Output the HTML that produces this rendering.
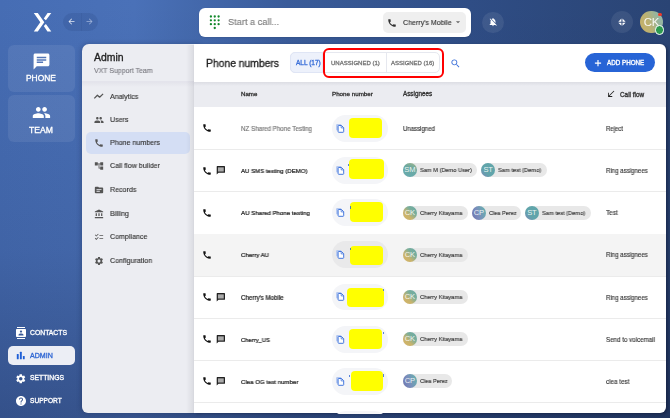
<!DOCTYPE html>
<html><head><meta charset="utf-8"><style>
*{box-sizing:border-box;margin:0;padding:0}
html,body{width:670px;height:418px;overflow:hidden}
body{position:relative;font-family:"Liberation Sans",sans-serif;background:linear-gradient(to bottom,rgba(10,15,40,0) 0%,rgba(10,15,40,0.1) 60%,rgba(10,15,40,0.3) 100%),linear-gradient(to right,#466db4 0%,#4a71b8 20%,#3a5c9a 43%,#2f4d85 70%,#2a4474 100%)}
.abs{position:absolute}
.t{white-space:nowrap;line-height:0;height:0;will-change:transform}
.t{transform:translateY(0)}
.tile{border-radius:6px;background:rgba(255,255,255,0.08)}
.chip{height:14px;border-radius:7px;background:#e8e8e8}
.chip .av{position:absolute;left:0;top:0;width:14px;height:14px;border-radius:7px;color:rgba(255,255,255,0.88);font-size:7.6px;letter-spacing:-0.25px;line-height:14px;text-align:center}
.chip span{position:absolute;left:17.3px;top:7px;line-height:0;font-size:5.7px;color:#333;white-space:nowrap}
</style></head><body>
<svg class="abs" style="left:28px;top:8px" width="30" height="30" viewBox="28 8 30 30"><path fill="#fff" d="M33.8 13 H37.8 L44.3 22.2 L37.8 31.4 H33.8 L40.3 22.2 Z M47.6 13 H51.3 L45.9 20.3 L43.8 18.5 Z M43.8 25.9 L45.9 24.1 L51.3 31.4 H47.4 Z"/></svg>
<div class="abs" style="left:63px;top:13px;width:35px;height:18px;border-radius:9px;background:rgba(20,40,90,0.12)"></div>
<div class="abs" style="left:80.8px;top:13px;width:0.8px;height:18px;background:rgba(20,40,90,0.07)"></div>
<svg class="abs" style="left:66.6px;top:17.4px" width="9" height="9" viewBox="0 0 24 24"><path fill="#e6ebf5" d="M20 11H7.83l5.59-5.59L12 4l-8 8 8 8 1.41-1.41L7.83 13H20v-2z"/></svg>
<svg class="abs" style="left:85.0px;top:17.4px" width="9" height="9" viewBox="0 0 24 24"><path fill="#9fb3d9" d="M12 4l-1.41 1.41L16.17 11H4v2h12.17l-5.58 5.59L12 20l8-8z"/></svg>
<div class="abs tile" style="left:7.5px;top:44.5px;width:67.5px;height:47px"></div>
<svg class="abs" style="left:31.7px;top:51.7px" width="19" height="19" viewBox="0 0 24 24"><path fill="#fff" d="M20 2H4c-1.1 0-1.99.9-1.99 2L2 22l4-4h14c1.1 0 2-.9 2-2V4c0-1.1-.9-2-2-2zM6 9h12v2H6V9zm8 5H6v-2h8v2zm4-6H6V6h12v2z"/></svg>
<div class="abs t" style="left:26.2px;top:78.3px;font-size:8.41px;transform:scaleX(1.0000);transform-origin:0 50%;color:#fff;font-weight:normal;-webkit-text-stroke:0.32px currentColor;">PHONE</div>
<div class="abs tile" style="left:7.5px;top:95.3px;width:67.5px;height:46.7px"></div>
<svg class="abs" style="left:31.7px;top:102.6px" width="18.9" height="18.9" viewBox="0 0 24 24"><path fill="#fff" d="M16 11c1.66 0 2.99-1.34 2.99-3S17.66 5 16 5c-1.66 0-3 1.34-3 3s1.34 3 3 3zm-8 0c1.66 0 2.99-1.34 2.99-3S9.66 5 8 5C6.34 5 5 6.34 5 8s1.34 3 3 3zm0 2c-2.330 0-7 1.17-7 3.5V19h14v-2.5c0-2.33-4.67-3.5-7-3.5zm8 0c-.29 0-.62.02-.97.05 1.16.84 1.97 1.97 1.97 3.45V19h6v-2.5c0-2.33-4.67-3.5-7-3.5z"/></svg>
<div class="abs t" style="left:29.2px;top:129.5px;font-size:8.60px;transform:scaleX(1.0000);transform-origin:0 50%;color:#fff;font-weight:normal;-webkit-text-stroke:0.32px currentColor;">TEAM</div>
<svg class="abs" style="left:14.5px;top:326.5px" width="12" height="12" viewBox="0 0 24 24"><path fill="#fff" d="M20 0H4v2h16V0zM4 24h16v-2H4v2zM20 4H4c-1.1 0-2 .9-2 2v12c0 1.1.9 2 2 2h16c1.1 0 2-.9 2-2V6c0-1.1-.9-2-2-2zm-8 2.75c1.24 0 2.25 1.01 2.25 2.25s-1.01 2.25-2.25 2.25S9.75 10.24 9.75 9 10.76 6.75 12 6.75zM17 17H7v-1.5c0-1.67 3.33-2.5 5-2.5s5 .83 5 2.5V17z"/></svg>
<div class="abs t" style="left:30.2px;top:332.5px;font-size:6.82px;transform:scaleX(1.0000);transform-origin:0 50%;color:#fff;font-weight:normal;-webkit-text-stroke:0.32px currentColor;">CONTACTS</div>
<div class="abs" style="left:7.5px;top:346px;width:67.5px;height:19px;border-radius:5px;background:#eceef5"></div>
<svg class="abs" style="left:12px;top:348px" width="18" height="16" viewBox="12 348 18 16"><rect x="16.8" y="354.1" width="1.9" height="5.2" rx="0.5" fill="#1f5fd6"/><rect x="19.9" y="351.8" width="1.9" height="7.5" rx="0.5" fill="#1f5fd6"/><rect x="22.9" y="356" width="1.8" height="3.3" rx="0.5" fill="#1f5fd6"/></svg>
<div class="abs t" style="left:30.2px;top:355.7px;font-size:7.08px;transform:scaleX(1.0000);transform-origin:0 50%;color:#2f66d3;font-weight:normal;-webkit-text-stroke:0.32px currentColor;">ADMIN</div>
<svg class="abs" style="left:15px;top:372.5px" width="11.5" height="11.5" viewBox="0 0 24 24"><path fill="#fff" d="M19.14 12.94c.04-.3.06-.61.06-.94 0-.32-.02-.64-.07-.94l2.03-1.58c.18-.14.23-.41.12-.61l-1.92-3.32c-.12-.22-.37-.29-.59-.22l-2.39.96c-.5-.38-1.03-.7-1.62-.94l-.36-2.54c-.04-.24-.24-.41-.48-.41h-3.84c-.24 0-.43.17-.47.41l-.36 2.54c-.59.24-1.13.57-1.62.94l-2.39-.96c-.22-.08-.47 0-.59.22L2.74 8.87c-.12.21-.08.47.12.61l2.03 1.58c-.05.3-.09.63-.09.94s.02.64.07.94l-2.03 1.58c-.18.14-.23.41-.12.61l1.92 3.32c.12.22.37.29.59.22l2.39-.96c.5.38 1.03.7 1.62.94l.36 2.54c.05.24.24.41.48.41h3.84c.24 0 .44-.17.47-.41l.36-2.54c.59-.24 1.13-.56 1.62-.94l2.39.96c.22.08.47 0 .59-.22l1.92-3.32c.12-.22.07-.47-.12-.61l-2.01-1.58zM12 15.6c-1.98 0-3.6-1.62-3.6-3.6s1.62-3.6 3.6-3.6 3.6 1.62 3.6 3.6-1.62 3.6-3.6 3.6z"/></svg>
<div class="abs t" style="left:30.2px;top:378.4px;font-size:6.80px;transform:scaleX(1.0000);transform-origin:0 50%;color:#fff;font-weight:normal;-webkit-text-stroke:0.32px currentColor;">SETTINGS</div>
<svg class="abs" style="left:14.5px;top:395px" width="12" height="12" viewBox="0 0 24 24"><path fill="#fff" d="M12 2C6.48 2 2 6.48 2 12s4.48 10 10 10 10-4.48 10-10S17.52 2 12 2zm1 17h-2v-2h2v2zm2.07-7.75l-.9.92C13.45 12.9 13 13.5 13 15h-2v-.5c0-1.1.45-2.1 1.17-2.83l1.24-1.26c.37-.36.59-.86.59-1.41 0-1.1-.9-2-2-2s-2 .9-2 2H8c0-2.21 1.79-4 4-4s4 1.79 4 4c0 .88-.36 1.68-.93 2.25z"/></svg>
<div class="abs t" style="left:30.2px;top:401px;font-size:6.60px;transform:scaleX(1.0000);transform-origin:0 50%;color:#fff;font-weight:normal;-webkit-text-stroke:0.32px currentColor;">SUPPORT</div>
<div class="abs" id="admin" style="left:82px;top:44.2px;width:118px;height:369.3px;background:#ecedf2;border-radius:7px 0 0 6px;box-shadow:-1px 0 5px rgba(10,20,50,0.25)"></div>
<div class="abs" style="left:82px;top:81px;width:112px;height:6px;background:linear-gradient(#e2e2ea,rgba(238,238,244,0))"></div>
<div class="abs" style="left:82px;top:80.8px;width:112px;height:1px;background:#e4e4ec"></div>
<div class="abs t" style="left:94px;top:58.3px;font-size:10.44px;transform:scaleX(1.0000);transform-origin:0 50%;color:#222;font-weight:normal;-webkit-text-stroke:0.32px currentColor;">Admin</div>
<div class="abs t" style="left:94px;top:70.5px;font-size:7.39px;transform:scaleX(0.9434);transform-origin:0 50%;color:#7a7a80;font-weight:normal;-webkit-text-stroke:0.14px currentColor;">VXT Support Team</div>
<div class="abs" style="left:86.3px;top:132.4px;width:103.8px;height:21.3px;border-radius:5px;background:#d4def4"></div>
<svg class="abs" style="left:88px;top:88px" width="20" height="14" viewBox="88 88 20 14"><path d="M94.3 98.4 L97.4 95.2 L99.6 97.2 L103.1 93.9" fill="none" stroke="#555" stroke-width="1.25" stroke-linejoin="round"/></svg>
<div class="abs t" style="left:109.9px;top:96.5px;font-size:7.53px;transform:scaleX(0.9434);transform-origin:0 50%;color:#333;font-weight:normal;-webkit-text-stroke:0.14px currentColor;">Analytics</div>
<svg class="abs" style="left:93.8px;top:114.8px" width="10" height="10" viewBox="0 0 24 24"><path fill="#555" d="M16 11c1.66 0 2.99-1.34 2.99-3S17.66 5 16 5c-1.66 0-3 1.34-3 3s1.34 3 3 3zm-8 0c1.66 0 2.99-1.34 2.99-3S9.66 5 8 5C6.34 5 5 6.34 5 8s1.34 3 3 3zm0 2c-2.330 0-7 1.17-7 3.5V19h14v-2.5c0-2.33-4.67-3.5-7-3.5zm8 0c-.29 0-.62.02-.97.05 1.16.84 1.97 1.97 1.97 3.45V19h6v-2.5c0-2.33-4.67-3.5-7-3.5z"/></svg>
<div class="abs t" style="left:109.9px;top:119.8px;font-size:7.53px;transform:scaleX(0.9434);transform-origin:0 50%;color:#333;font-weight:normal;-webkit-text-stroke:0.14px currentColor;">Users</div>
<svg class="abs" style="left:93.8px;top:138px" width="10" height="10" viewBox="0 0 24 24"><path fill="#555" d="M20.01 15.38c-1.23 0-2.42-.2-3.53-.56-.35-.12-.74-.03-1.01.24l-1.57 1.97c-2.83-1.35-5.48-3.9-6.89-6.830l1.95-1.66c.27-.28.35-.67.24-1.02-.37-1.11-.56-2.3-.56-3.53 0-.54-.45-.99-.99-.99H4.19C3.65 3 3 3.24 3 3.99 3 13.28 10.73 21 20.010 21c.71 0 .99-.63.99-1.18v-3.45c0-.54-.45-.99-.99-.99z"/></svg>
<div class="abs t" style="left:109.9px;top:143px;font-size:7.53px;transform:scaleX(0.9434);transform-origin:0 50%;color:#333;font-weight:normal;-webkit-text-stroke:0.14px currentColor;">Phone numbers</div>
<svg class="abs" style="left:93.8px;top:161.4px" width="10" height="10" viewBox="0 0 24 24"><path fill="#555" d="M22 11V3h-7v3H9V3H2v8h7V8h2v10h4v3h7v-8h-7v3h-2V8h2v3z"/></svg>
<div class="abs t" style="left:109.9px;top:166.4px;font-size:7.53px;transform:scaleX(0.9434);transform-origin:0 50%;color:#333;font-weight:normal;-webkit-text-stroke:0.14px currentColor;">Call flow builder</div>
<svg class="abs" style="left:93.8px;top:185.2px" width="10" height="10" viewBox="0 0 24 24"><path fill="#555" d="M20 6h-8l-2-2H4c-1.1 0-1.99.9-1.99 2L2 18c0 1.1.9 2 2 2h16c1.1 0 2-.9 2-2V8c0-1.1-.9-2-2-2zm-6 10H6v-2h8v2zm4-4H6v-2h12v2z"/></svg>
<div class="abs t" style="left:109.9px;top:190.2px;font-size:7.53px;transform:scaleX(0.9434);transform-origin:0 50%;color:#333;font-weight:normal;-webkit-text-stroke:0.14px currentColor;">Records</div>
<svg class="abs" style="left:93.8px;top:208.6px" width="10" height="10" viewBox="0 0 24 24"><path fill="#555" d="M4 10h3v7H4zM10.5 10h3v7h-3zM2 19h20v3H2zM17 10h3v7h-3zM12 1L2 6v2h20V6z"/></svg>
<div class="abs t" style="left:109.9px;top:213.6px;font-size:7.53px;transform:scaleX(0.9434);transform-origin:0 50%;color:#333;font-weight:normal;-webkit-text-stroke:0.14px currentColor;">Billing</div>
<svg class="abs" style="left:93.8px;top:231.8px" width="10" height="10" viewBox="0 0 24 24"><path fill="#555" d="M22 7h-9v2h9V7zm0 8h-9v2h9v-2zM5.54 11L2 7.46l1.41-1.41 2.12 2.12 4.24-4.24 1.41 1.41L5.54 11zm0 8L2 15.46l1.41-1.41 2.12 2.12 4.24-4.24 1.41 1.41L5.54 19z"/></svg>
<div class="abs t" style="left:109.9px;top:236.8px;font-size:7.53px;transform:scaleX(0.9434);transform-origin:0 50%;color:#333;font-weight:normal;-webkit-text-stroke:0.14px currentColor;">Compliance</div>
<svg class="abs" style="left:93.8px;top:255.5px" width="10" height="10" viewBox="0 0 24 24"><path fill="#555" d="M19.14 12.94c.04-.3.06-.61.06-.94 0-.32-.02-.64-.07-.94l2.03-1.58c.18-.14.23-.41.12-.61l-1.92-3.32c-.12-.22-.37-.29-.59-.22l-2.39.96c-.5-.38-1.03-.7-1.62-.94l-.36-2.54c-.04-.24-.24-.41-.48-.41h-3.84c-.24 0-.43.17-.47.41l-.36 2.54c-.59.24-1.13.57-1.62.94l-2.39-.96c-.22-.08-.47 0-.59.22L2.74 8.87c-.12.21-.08.47.12.61l2.03 1.58c-.05.3-.09.63-.09.94s.02.64.07.94l-2.03 1.58c-.18.14-.23.41-.12.61l1.92 3.32c.12.22.37.29.59.22l2.39-.96c.5.38 1.03.7 1.62.94l.36 2.54c.05.24.24.41.48.41h3.84c.24 0 .44-.17.47-.41l.36-2.54c.59-.24 1.13-.56 1.62-.94l2.39.96c.22.08.47 0 .59-.22l1.92-3.32c.12-.22.07-.47-.12-.61l-2.01-1.58zM12 15.6c-1.98 0-3.6-1.62-3.6-3.6s1.62-3.6 3.6-3.6 3.6 1.62 3.6 3.6-1.62 3.6-3.6 3.6z"/></svg>
<div class="abs t" style="left:109.9px;top:260.5px;font-size:7.53px;transform:scaleX(0.9434);transform-origin:0 50%;color:#333;font-weight:normal;-webkit-text-stroke:0.14px currentColor;">Configuration</div>
<div class="abs" style="left:194px;top:44.3px;width:472px;height:369.1px;background:#fff;border-radius:0 6px 6px 0;box-shadow:2px 1px 3px rgba(0,0,20,0.3)"></div>
<div class="abs" style="left:186px;top:44.5px;width:8px;height:369px;background:linear-gradient(90deg,rgba(0,0,20,0),rgba(0,0,20,0.08))"></div>
<div class="abs t" style="left:205.7px;top:63px;font-size:10.77px;transform:scaleX(0.9615);transform-origin:0 50%;color:#222;font-weight:normal;-webkit-text-stroke:0.32px currentColor;">Phone numbers</div>
<div class="abs" style="left:290px;top:52.3px;width:150.3px;height:21px;border-radius:5px;border:1px solid #e6e8ef;background:#fff"></div>
<div class="abs" style="left:290px;top:52.3px;width:33px;height:21px;border-radius:5px 0 0 5px;background:#edf1fb;border:1px solid #dfe5f5"></div>
<div class="abs" style="left:385.7px;top:53px;width:1px;height:20px;background:#e6e8ef"></div>
<div class="abs t" style="left:295.8px;top:63px;font-size:6.50px;transform:scaleX(1.0000);transform-origin:0 50%;color:#3a6fd8;font-weight:normal;-webkit-text-stroke:0.32px currentColor;">ALL (17)</div>
<div class="abs t" style="left:331.2px;top:63px;font-size:6.02px;transform:scaleX(1.0000);transform-origin:0 50%;color:#777;font-weight:normal;-webkit-text-stroke:0.32px currentColor;">UNASSIGNED (1)</div>
<div class="abs t" style="left:391.4px;top:63px;font-size:5.99px;transform:scaleX(1.0000);transform-origin:0 50%;color:#777;font-weight:normal;-webkit-text-stroke:0.32px currentColor;">ASSIGNED (16)</div>
<div class="abs" style="left:322.8px;top:48.2px;width:121.4px;height:29.5px;border-radius:6px;border:2.4px solid #f00"></div>
<svg class="abs" style="left:449.5px;top:58px" width="11" height="11" viewBox="0 0 24 24"><path fill="#3a6fd8" d="M15.5 14h-.79l-.28-.27C15.41 12.59 16 11.110 16 9.5 16 5.91 13.09 3 9.5 3S3 5.91 3 9.5 5.91 16 9.5 16c1.61 0 3.09-.59 4.23-1.57l.27.28v.79l5 4.99L20.49 19l-4.99-5zm-6 0C7.01 14 5 11.99 5 9.5S7.01 5 9.5 5 14 7.01 14 9.5 11.99 14 9.5 14z"/></svg>
<div class="abs" style="left:585px;top:53.2px;width:70px;height:19.2px;border-radius:9.6px;background:#2764d6"></div>
<svg class="abs" style="left:590px;top:56px" width="14" height="14" viewBox="590 56 14 14"><path d="M598 60 V66.2 M594.9 63.1 H601.1" stroke="#fff" stroke-width="1.15" fill="none"/></svg>
<div class="abs t" style="left:607.2px;top:63.2px;font-size:6.27px;transform:scaleX(1.0000);transform-origin:0 50%;color:#fff;font-weight:normal;-webkit-text-stroke:0.32px currentColor;">ADD PHONE</div>
<div class="abs" style="left:194px;top:82px;width:471.5px;height:25.2px;background:#ebecf1"></div>
<div class="abs" style="left:194px;top:82px;width:471.5px;height:4px;background:linear-gradient(#dcdde3,rgba(235,236,241,0))"></div>
<div class="abs t" style="left:241px;top:94.4px;font-size:6.15px;transform:scaleX(1.0000);transform-origin:0 50%;color:#333;font-weight:normal;-webkit-text-stroke:0.32px currentColor;">Name</div>
<div class="abs t" style="left:332px;top:94.4px;font-size:6.22px;transform:scaleX(1.0000);transform-origin:0 50%;color:#333;font-weight:normal;-webkit-text-stroke:0.32px currentColor;">Phone number</div>
<div class="abs t" style="left:403.1px;top:94.4px;font-size:6.31px;transform:scaleX(1.0000);transform-origin:0 50%;color:#333;font-weight:normal;-webkit-text-stroke:0.32px currentColor;">Assignees</div>
<svg class="abs" style="left:606.4px;top:89.2px" width="10" height="10" viewBox="0 0 24 24"><path fill="#222" d="M15 19v-2H8.41L20 5.41 18.59 4 7 15.59V9H5v10h10z"/></svg>
<div class="abs t" style="left:620px;top:94.6px;font-size:6.40px;transform:scaleX(1.0000);transform-origin:0 50%;color:#333;font-weight:normal;-webkit-text-stroke:0.32px currentColor;">Call flow</div>
<div class="abs" style="left:194px;top:149.18px;width:471.5px;height:1px;background:#ebebeb"></div>
<svg class="abs" style="left:202px;top:123.38999999999999px" width="10" height="10" viewBox="0 0 24 24"><path fill="#111" d="M20.01 15.38c-1.23 0-2.42-.2-3.53-.56-.35-.12-.74-.03-1.01.24l-1.57 1.97c-2.83-1.35-5.48-3.9-6.89-6.830l1.95-1.66c.27-.28.35-.67.24-1.02-.37-1.11-.56-2.3-.56-3.53 0-.54-.45-.99-.99-.99H4.19C3.65 3 3 3.24 3 3.99 3 13.28 10.73 21 20.010 21c.71 0 .99-.63.99-1.18v-3.45c0-.54-.45-.99-.99-.99z"/></svg>
<div class="abs t" style="left:241px;top:128.79px;font-size:6.33px;transform:scaleX(0.9804);transform-origin:0 50%;color:#777;font-weight:normal;-webkit-text-stroke:0.16px currentColor;">NZ Shared Phone Testing</div>
<div class="abs" style="left:332.2px;top:114.89px;width:56px;height:26.8px;border-radius:13.4px;background:#f4f5f8"></div>
<svg class="abs" style="left:335px;top:122.69px" width="10" height="10" viewBox="0 0 10 10"><rect x="1.1" y="0.9" width="5.2" height="6.6" rx="1" fill="#b4c8f0"/><path d="M3.1 3.2 Q3.1 2.5 3.8 2.5 H6.5 L8.7 4.7 V8.6 Q8.7 9.3 8 9.3 H3.8 Q3.1 9.3 3.1 8.6 Z" fill="#fff" stroke="#4477dd" stroke-width="1.0"/><path d="M6.2 2.6 L6.2 4.9 L8.6 4.9" fill="none" stroke="#4477dd" stroke-width="0.8"/></svg>
<div class="abs" style="left:348.8px;top:117.8px;width:33.2px;height:20.4px;border-radius:4px;background:#ffff00"></div>
<div class="abs t" style="left:403.1px;top:128.69px;font-size:6.40px;transform:scaleX(0.9434);transform-origin:0 50%;color:#333;font-weight:normal;-webkit-text-stroke:0.14px currentColor;">Unassigned</div>
<div class="abs t" style="left:606px;top:128.79px;font-size:6.36px;transform:scaleX(0.9434);transform-origin:0 50%;color:#333;font-weight:normal;-webkit-text-stroke:0.14px currentColor;">Reject</div>
<div class="abs" style="left:194px;top:191.36px;width:471.5px;height:1px;background:#ebebeb"></div>
<svg class="abs" style="left:202px;top:165.57px" width="10" height="10" viewBox="0 0 24 24"><path fill="#111" d="M20.01 15.38c-1.23 0-2.42-.2-3.53-.56-.35-.12-.74-.03-1.01.24l-1.57 1.97c-2.83-1.35-5.48-3.9-6.89-6.830l1.95-1.66c.27-.28.35-.67.24-1.02-.37-1.11-.56-2.3-.56-3.53 0-.54-.45-.99-.99-.99H4.19C3.65 3 3 3.24 3 3.99 3 13.28 10.73 21 20.010 21c.71 0 .99-.63.99-1.18v-3.45c0-.54-.45-.99-.99-.99z"/></svg>
<svg class="abs" style="left:214px;top:164.27px" width="14" height="12" viewBox="0 0 14 12"><path d="M3.2 2.1 H10.4 Q11 2.1 11 2.7 V8.2 Q11 8.8 10.4 8.8 H4.5 L2.7 10.6 V2.7 Q2.7 2.1 3.2 2.1 Z" fill="#222"/><rect x="3.95" y="3.35" width="5.8" height="4.2" fill="#ababab"/></svg>
<div class="abs t" style="left:241px;top:170.97px;font-size:6.17px;transform:scaleX(0.9804);transform-origin:0 50%;color:#222;font-weight:normal;-webkit-text-stroke:0.22px currentColor;">AU SMS testing (DEMO)</div>
<div class="abs" style="left:332.2px;top:157.07px;width:56px;height:26.8px;border-radius:13.4px;background:#f4f5f8"></div>
<svg class="abs" style="left:335px;top:164.87px" width="10" height="10" viewBox="0 0 10 10"><rect x="1.1" y="0.9" width="5.2" height="6.6" rx="1" fill="#b4c8f0"/><path d="M3.1 3.2 Q3.1 2.5 3.8 2.5 H6.5 L8.7 4.7 V8.6 Q8.7 9.3 8 9.3 H3.8 Q3.1 9.3 3.1 8.6 Z" fill="#fff" stroke="#4477dd" stroke-width="1.0"/><path d="M6.2 2.6 L6.2 4.9 L8.6 4.9" fill="none" stroke="#4477dd" stroke-width="0.8"/></svg>
<div class="abs" style="left:349px;top:159.2px;width:35.0px;height:19.7px;border-radius:4px;background:#ffff00"></div>
<div class="abs" style="left:347.7px;top:163.9px;width:1.1px;height:2.4px;background:#2f66d3;opacity:0.8"></div>
<div class="abs chip" style="left:402.8px;top:163.47px;width:74.5px"><div class="av" style="background:linear-gradient(200deg,#a4b68a 0%,#6ca9a0 35%,#66aab0 100%)">SM</div></div>
<div class="abs t" style="left:419.8px;top:170.47px;font-size:6.00px;transform:scaleX(0.9434);transform-origin:0 50%;color:#333;font-weight:normal;-webkit-text-stroke:0.14px currentColor;">Sam M (Demo User)</div>
<div class="abs chip" style="left:481.0px;top:163.47px;width:66.4px"><div class="av" style="background:linear-gradient(45deg,#7a86b8 0%,#62a4ab 35%,#5fa6aa 100%)">ST</div></div>
<div class="abs t" style="left:498.0px;top:170.47px;font-size:6.07px;transform:scaleX(0.9434);transform-origin:0 50%;color:#333;font-weight:normal;-webkit-text-stroke:0.14px currentColor;">Sam test (Demo)</div>
<div class="abs t" style="left:606px;top:170.97px;font-size:6.48px;transform:scaleX(0.9434);transform-origin:0 50%;color:#333;font-weight:normal;-webkit-text-stroke:0.14px currentColor;">Ring assignees</div>
<div class="abs" style="left:194px;top:233.54px;width:471.5px;height:1px;background:#ebebeb"></div>
<svg class="abs" style="left:202px;top:207.75px" width="10" height="10" viewBox="0 0 24 24"><path fill="#111" d="M20.01 15.38c-1.23 0-2.42-.2-3.53-.56-.35-.12-.74-.03-1.01.24l-1.57 1.97c-2.83-1.35-5.48-3.9-6.89-6.830l1.95-1.66c.27-.28.35-.67.24-1.02-.37-1.11-.56-2.3-.56-3.53 0-.54-.45-.99-.99-.99H4.19C3.65 3 3 3.24 3 3.99 3 13.28 10.73 21 20.010 21c.71 0 .99-.63.99-1.18v-3.45c0-.54-.45-.99-.99-.99z"/></svg>
<div class="abs t" style="left:241px;top:213.15px;font-size:6.23px;transform:scaleX(0.9804);transform-origin:0 50%;color:#222;font-weight:normal;-webkit-text-stroke:0.22px currentColor;">AU Shared Phone testing</div>
<div class="abs" style="left:332.2px;top:199.25px;width:56px;height:26.8px;border-radius:13.4px;background:#f4f5f8"></div>
<svg class="abs" style="left:335px;top:207.05px" width="10" height="10" viewBox="0 0 10 10"><rect x="1.1" y="0.9" width="5.2" height="6.6" rx="1" fill="#b4c8f0"/><path d="M3.1 3.2 Q3.1 2.5 3.8 2.5 H6.5 L8.7 4.7 V8.6 Q8.7 9.3 8 9.3 H3.8 Q3.1 9.3 3.1 8.6 Z" fill="#fff" stroke="#4477dd" stroke-width="1.0"/><path d="M6.2 2.6 L6.2 4.9 L8.6 4.9" fill="none" stroke="#4477dd" stroke-width="0.8"/></svg>
<div class="abs" style="left:350.4px;top:201.9px;width:32.6px;height:19.9px;border-radius:4px;background:#ffff00"></div>
<div class="abs" style="left:349.9px;top:206.3px;width:1.1px;height:2.4px;background:#2f66d3;opacity:0.8"></div>
<div class="abs chip" style="left:402.8px;top:205.65px;width:65.2px"><div class="av" style="background:linear-gradient(45deg,#d6b566 0%,#c9b36c 35%,#78ae9c 65%,#6aa9a5 100%)">CK</div></div>
<div class="abs t" style="left:419.8px;top:212.65px;font-size:6.02px;transform:scaleX(0.9434);transform-origin:0 50%;color:#333;font-weight:normal;-webkit-text-stroke:0.14px currentColor;">Cherry Kitayama</div>
<div class="abs chip" style="left:471.7px;top:205.65px;width:49.5px"><div class="av" style="background:linear-gradient(70deg,#6c74ae 0%,#7a8cbc 40%,#6aabb0 85%)">CP</div></div>
<div class="abs t" style="left:488.7px;top:212.65px;font-size:5.91px;transform:scaleX(0.9434);transform-origin:0 50%;color:#333;font-weight:normal;-webkit-text-stroke:0.14px currentColor;">Clea Perez</div>
<div class="abs chip" style="left:524.9px;top:205.65px;width:66.4px"><div class="av" style="background:linear-gradient(45deg,#7a86b8 0%,#62a4ab 35%,#5fa6aa 100%)">ST</div></div>
<div class="abs t" style="left:541.9px;top:212.65px;font-size:6.07px;transform:scaleX(0.9434);transform-origin:0 50%;color:#333;font-weight:normal;-webkit-text-stroke:0.14px currentColor;">Sam test (Demo)</div>
<div class="abs t" style="left:606px;top:213.15px;font-size:6.76px;transform:scaleX(0.9434);transform-origin:0 50%;color:#333;font-weight:normal;-webkit-text-stroke:0.14px currentColor;">Test</div>
<div class="abs" style="left:194px;top:233.74px;width:471.5px;height:42.18px;background:#f4f4f4"></div>
<div class="abs" style="left:194px;top:275.72px;width:471.5px;height:1px;background:#ebebeb"></div>
<svg class="abs" style="left:202px;top:249.93px" width="10" height="10" viewBox="0 0 24 24"><path fill="#111" d="M20.01 15.38c-1.23 0-2.42-.2-3.53-.56-.35-.12-.74-.03-1.01.24l-1.57 1.97c-2.83-1.35-5.48-3.9-6.89-6.830l1.95-1.66c.27-.28.35-.67.24-1.02-.37-1.11-.56-2.3-.56-3.53 0-.54-.45-.99-.99-.99H4.19C3.65 3 3 3.24 3 3.99 3 13.28 10.73 21 20.010 21c.71 0 .99-.63.99-1.18v-3.45c0-.54-.45-.99-.99-.99z"/></svg>
<div class="abs t" style="left:241px;top:255.33px;font-size:6.19px;transform:scaleX(0.9804);transform-origin:0 50%;color:#222;font-weight:normal;-webkit-text-stroke:0.22px currentColor;">Cherry AU</div>
<div class="abs" style="left:332.2px;top:241.43px;width:56px;height:26.8px;border-radius:13.4px;background:#e9e9ea"></div>
<svg class="abs" style="left:335px;top:249.23px" width="10" height="10" viewBox="0 0 10 10"><rect x="1.1" y="0.9" width="5.2" height="6.6" rx="1" fill="#b4c8f0"/><path d="M3.1 3.2 Q3.1 2.5 3.8 2.5 H6.5 L8.7 4.7 V8.6 Q8.7 9.3 8 9.3 H3.8 Q3.1 9.3 3.1 8.6 Z" fill="#fff" stroke="#4477dd" stroke-width="1.0"/><path d="M6.2 2.6 L6.2 4.9 L8.6 4.9" fill="none" stroke="#4477dd" stroke-width="0.8"/></svg>
<div class="abs" style="left:350.4px;top:245.6px;width:32.6px;height:19.9px;border-radius:4px;background:#ffff00"></div>
<div class="abs" style="left:349.9px;top:247.60000000000002px;width:1.1px;height:2.4px;background:#2f66d3;opacity:0.8"></div>
<div class="abs chip" style="left:402.8px;top:247.83px;width:65.2px"><div class="av" style="background:linear-gradient(45deg,#d6b566 0%,#c9b36c 35%,#78ae9c 65%,#6aa9a5 100%)">CK</div></div>
<div class="abs t" style="left:419.8px;top:254.83px;font-size:6.02px;transform:scaleX(0.9434);transform-origin:0 50%;color:#333;font-weight:normal;-webkit-text-stroke:0.14px currentColor;">Cherry Kitayama</div>
<div class="abs t" style="left:606px;top:255.33px;font-size:6.48px;transform:scaleX(0.9434);transform-origin:0 50%;color:#333;font-weight:normal;-webkit-text-stroke:0.14px currentColor;">Ring assignees</div>
<div class="abs" style="left:194px;top:317.90px;width:471.5px;height:1px;background:#ebebeb"></div>
<svg class="abs" style="left:202px;top:292.11px" width="10" height="10" viewBox="0 0 24 24"><path fill="#111" d="M20.01 15.38c-1.23 0-2.42-.2-3.53-.56-.35-.12-.74-.03-1.01.24l-1.57 1.97c-2.83-1.35-5.48-3.9-6.89-6.830l1.95-1.66c.27-.28.35-.67.24-1.02-.37-1.11-.56-2.3-.56-3.53 0-.54-.45-.99-.99-.99H4.19C3.65 3 3 3.24 3 3.99 3 13.28 10.73 21 20.010 21c.71 0 .99-.63.99-1.18v-3.45c0-.54-.45-.99-.99-.99z"/></svg>
<svg class="abs" style="left:214px;top:290.81px" width="14" height="12" viewBox="0 0 14 12"><path d="M3.2 2.1 H10.4 Q11 2.1 11 2.7 V8.2 Q11 8.8 10.4 8.8 H4.5 L2.7 10.6 V2.7 Q2.7 2.1 3.2 2.1 Z" fill="#222"/><rect x="3.95" y="3.35" width="5.8" height="4.2" fill="#ababab"/></svg>
<div class="abs t" style="left:241px;top:297.51px;font-size:6.31px;transform:scaleX(0.9804);transform-origin:0 50%;color:#222;font-weight:normal;-webkit-text-stroke:0.22px currentColor;">Cherry's Mobile</div>
<div class="abs" style="left:332.2px;top:283.61px;width:56px;height:26.8px;border-radius:13.4px;background:#f4f5f8"></div>
<svg class="abs" style="left:335px;top:291.41px" width="10" height="10" viewBox="0 0 10 10"><rect x="1.1" y="0.9" width="5.2" height="6.6" rx="1" fill="#b4c8f0"/><path d="M3.1 3.2 Q3.1 2.5 3.8 2.5 H6.5 L8.7 4.7 V8.6 Q8.7 9.3 8 9.3 H3.8 Q3.1 9.3 3.1 8.6 Z" fill="#fff" stroke="#4477dd" stroke-width="1.0"/><path d="M6.2 2.6 L6.2 4.9 L8.6 4.9" fill="none" stroke="#4477dd" stroke-width="0.8"/></svg>
<div class="abs" style="left:347.4px;top:287.5px;width:36.6px;height:19.7px;border-radius:4px;background:#ffff00"></div>
<div class="abs" style="left:383.4px;top:288.8px;width:1.1px;height:2.4px;background:#2f66d3;opacity:0.8"></div>
<div class="abs chip" style="left:402.8px;top:290.01px;width:65.2px"><div class="av" style="background:linear-gradient(45deg,#d6b566 0%,#c9b36c 35%,#78ae9c 65%,#6aa9a5 100%)">CK</div></div>
<div class="abs t" style="left:419.8px;top:297.01px;font-size:6.02px;transform:scaleX(0.9434);transform-origin:0 50%;color:#333;font-weight:normal;-webkit-text-stroke:0.14px currentColor;">Cherry Kitayama</div>
<div class="abs t" style="left:606px;top:297.51px;font-size:6.48px;transform:scaleX(0.9434);transform-origin:0 50%;color:#333;font-weight:normal;-webkit-text-stroke:0.14px currentColor;">Ring assignees</div>
<div class="abs" style="left:194px;top:360.08px;width:471.5px;height:1px;background:#ebebeb"></div>
<svg class="abs" style="left:202px;top:334.29px" width="10" height="10" viewBox="0 0 24 24"><path fill="#111" d="M20.01 15.38c-1.23 0-2.42-.2-3.53-.56-.35-.12-.74-.03-1.01.24l-1.57 1.97c-2.83-1.35-5.48-3.9-6.89-6.830l1.95-1.66c.27-.28.35-.67.24-1.02-.37-1.11-.56-2.3-.56-3.53 0-.54-.45-.99-.99-.99H4.19C3.65 3 3 3.24 3 3.99 3 13.28 10.73 21 20.010 21c.71 0 .99-.63.99-1.18v-3.45c0-.54-.45-.99-.99-.99z"/></svg>
<svg class="abs" style="left:214px;top:332.99px" width="14" height="12" viewBox="0 0 14 12"><path d="M3.2 2.1 H10.4 Q11 2.1 11 2.7 V8.2 Q11 8.8 10.4 8.8 H4.5 L2.7 10.6 V2.7 Q2.7 2.1 3.2 2.1 Z" fill="#222"/><rect x="3.95" y="3.35" width="5.8" height="4.2" fill="#ababab"/></svg>
<div class="abs t" style="left:241px;top:339.69px;font-size:5.96px;transform:scaleX(0.9804);transform-origin:0 50%;color:#222;font-weight:normal;-webkit-text-stroke:0.22px currentColor;">Cherry_US</div>
<div class="abs" style="left:332.2px;top:325.79px;width:56px;height:26.8px;border-radius:13.4px;background:#f4f5f8"></div>
<svg class="abs" style="left:335px;top:333.59px" width="10" height="10" viewBox="0 0 10 10"><rect x="1.1" y="0.9" width="5.2" height="6.6" rx="1" fill="#b4c8f0"/><path d="M3.1 3.2 Q3.1 2.5 3.8 2.5 H6.5 L8.7 4.7 V8.6 Q8.7 9.3 8 9.3 H3.8 Q3.1 9.3 3.1 8.6 Z" fill="#fff" stroke="#4477dd" stroke-width="1.0"/><path d="M6.2 2.6 L6.2 4.9 L8.6 4.9" fill="none" stroke="#4477dd" stroke-width="0.8"/></svg>
<div class="abs" style="left:349px;top:329.2px;width:32.6px;height:20.3px;border-radius:4px;background:#ffff00"></div>
<div class="abs" style="left:382.7px;top:331.8px;width:1.1px;height:2.4px;background:#2f66d3;opacity:0.8"></div>
<div class="abs chip" style="left:402.8px;top:332.19px;width:65.2px"><div class="av" style="background:linear-gradient(45deg,#d6b566 0%,#c9b36c 35%,#78ae9c 65%,#6aa9a5 100%)">CK</div></div>
<div class="abs t" style="left:419.8px;top:339.19px;font-size:6.02px;transform:scaleX(0.9434);transform-origin:0 50%;color:#333;font-weight:normal;-webkit-text-stroke:0.14px currentColor;">Cherry Kitayama</div>
<div class="abs t" style="left:606px;top:339.69px;font-size:6.58px;transform:scaleX(0.9434);transform-origin:0 50%;color:#333;font-weight:normal;-webkit-text-stroke:0.14px currentColor;">Send to voicemail</div>
<div class="abs" style="left:194px;top:402.26px;width:471.5px;height:1px;background:#ebebeb"></div>
<svg class="abs" style="left:202px;top:376.46999999999997px" width="10" height="10" viewBox="0 0 24 24"><path fill="#111" d="M20.01 15.38c-1.23 0-2.42-.2-3.53-.56-.35-.12-.74-.03-1.01.24l-1.57 1.97c-2.83-1.35-5.48-3.9-6.89-6.830l1.95-1.66c.27-.28.35-.67.24-1.02-.37-1.11-.56-2.3-.56-3.53 0-.54-.45-.99-.99-.99H4.19C3.65 3 3 3.24 3 3.99 3 13.28 10.73 21 20.010 21c.71 0 .99-.63.99-1.18v-3.45c0-.54-.45-.99-.99-.99z"/></svg>
<svg class="abs" style="left:214px;top:375.17px" width="14" height="12" viewBox="0 0 14 12"><path d="M3.2 2.1 H10.4 Q11 2.1 11 2.7 V8.2 Q11 8.8 10.4 8.8 H4.5 L2.7 10.6 V2.7 Q2.7 2.1 3.2 2.1 Z" fill="#222"/><rect x="3.95" y="3.35" width="5.8" height="4.2" fill="#ababab"/></svg>
<div class="abs t" style="left:241px;top:381.87px;font-size:6.20px;transform:scaleX(0.9804);transform-origin:0 50%;color:#222;font-weight:normal;-webkit-text-stroke:0.22px currentColor;">Clea OG test number</div>
<div class="abs" style="left:332.2px;top:367.97px;width:56px;height:26.8px;border-radius:13.4px;background:#f4f5f8"></div>
<svg class="abs" style="left:335px;top:375.77px" width="10" height="10" viewBox="0 0 10 10"><rect x="1.1" y="0.9" width="5.2" height="6.6" rx="1" fill="#b4c8f0"/><path d="M3.1 3.2 Q3.1 2.5 3.8 2.5 H6.5 L8.7 4.7 V8.6 Q8.7 9.3 8 9.3 H3.8 Q3.1 9.3 3.1 8.6 Z" fill="#fff" stroke="#4477dd" stroke-width="1.0"/><path d="M6.2 2.6 L6.2 4.9 L8.6 4.9" fill="none" stroke="#4477dd" stroke-width="0.8"/></svg>
<div class="abs" style="left:350.5px;top:371.2px;width:32.6px;height:20.2px;border-radius:4px;background:#ffff00"></div>
<div class="abs" style="left:348.8px;top:375.1px;width:1.1px;height:2.4px;background:#2f66d3;opacity:0.8"></div>
<div class="abs" style="left:383.1px;top:374.3px;width:1.1px;height:2.4px;background:#2f66d3;opacity:0.8"></div>
<div class="abs chip" style="left:402.8px;top:374.37px;width:49.5px"><div class="av" style="background:linear-gradient(70deg,#6c74ae 0%,#7a8cbc 40%,#6aabb0 85%)">CP</div></div>
<div class="abs t" style="left:419.8px;top:381.37px;font-size:5.91px;transform:scaleX(0.9434);transform-origin:0 50%;color:#333;font-weight:normal;-webkit-text-stroke:0.14px currentColor;">Clea Perez</div>
<div class="abs t" style="left:606px;top:381.87px;font-size:6.66px;transform:scaleX(0.9434);transform-origin:0 50%;color:#333;font-weight:normal;-webkit-text-stroke:0.14px currentColor;">clea test</div>
<div class="abs" style="left:194px;top:403px;width:471.5px;height:10.5px;overflow:hidden;border-radius:0 0 5px 0"><div class="abs" style="left:138.2px;top:8px;width:56px;height:26.8px;border-radius:13.4px;background:#f6f6f9"></div></div>
<div class="abs" style="left:198.8px;top:7.5px;width:272.2px;height:29.7px;background:#fff;border-radius:6px;box-shadow:0 1px 2px rgba(0,0,0,0.1)"></div>

<svg class="abs" style="left:204px;top:12px" width="22" height="20" viewBox="0 0 22 20"><circle cx="6.90" cy="4.50" r="1.15" fill="#11882a"/><circle cx="10.75" cy="4.50" r="1.15" fill="#11882a"/><circle cx="14.60" cy="4.50" r="1.15" fill="#11882a"/><circle cx="6.90" cy="8.35" r="1.15" fill="#11882a"/><circle cx="10.75" cy="8.35" r="1.15" fill="#11882a"/><circle cx="14.60" cy="8.35" r="1.15" fill="#11882a"/><circle cx="6.90" cy="12.20" r="1.15" fill="#11882a"/><circle cx="10.75" cy="12.20" r="1.15" fill="#11882a"/><circle cx="14.60" cy="12.20" r="1.15" fill="#11882a"/><circle cx="10.75" cy="16" r="1.15" fill="#11882a"/></svg>
<div class="abs t" style="left:228.4px;top:22.3px;font-size:9.75px;transform:scaleX(0.9434);transform-origin:0 50%;color:#7b7b7b;font-weight:normal;-webkit-text-stroke:0.14px currentColor;">Start a call...</div>
<div class="abs" style="left:382.8px;top:11.7px;width:83.5px;height:21.3px;border-radius:5px;background:#efefef"></div>
<svg class="abs" style="left:386.5px;top:17.5px" width="10" height="10" viewBox="0 0 24 24"><path fill="#333" d="M20.01 15.38c-1.23 0-2.42-.2-3.53-.56-.35-.12-.74-.03-1.01.24l-1.57 1.97c-2.83-1.35-5.48-3.9-6.89-6.830l1.95-1.66c.27-.28.35-.67.24-1.02-.37-1.11-.56-2.3-.56-3.53 0-.54-.45-.99-.99-.99H4.19C3.65 3 3 3.24 3 3.99 3 13.28 10.73 21 20.010 21c.71 0 .99-.63.99-1.18v-3.45c0-.54-.45-.99-.99-.99z"/></svg>
<div class="abs t" style="left:403px;top:22.5px;font-size:7.46px;transform:scaleX(0.9434);transform-origin:0 50%;color:#333;font-weight:normal;-webkit-text-stroke:0.14px currentColor;">Cherry's Mobile</div>
<svg class="abs" style="left:453.3px;top:17.1px" width="10" height="10" viewBox="0 0 24 24"><path fill="#666" d="M7 10l5 5 5-5z"/></svg>
<div class="abs" style="left:482px;top:11.5px;width:21.5px;height:21.5px;border-radius:11px;background:rgba(255,255,255,0.08)"></div>
<svg class="abs" style="left:487.6px;top:17px" width="10" height="10" viewBox="0 0 24 24"><path fill="#fff" d="M20 18.69L7.84 6.14 5.27 3.49 4 4.76l2.8 2.8v.01c-.52.99-.8 2.16-.8 3.42v5l-2 2v1h13.73l2 2L21 19.72l-1-1.03zM12 22c1.11 0 2-.89 2-2h-4c0 1.11.89 2 2 2zm6-7.32V11c0-3.08-1.64-5.64-4.5-6.32V4c0-.83-.67-1.5-1.5-1.5s-1.5.67-1.5 1.5v.68c-.15.03-.29.08-.42.12-.1.03-.2.07-.3.11h-.01c-.01 0-.01 0-.02.01-.23.09-.46.2-.68.31 0 0-.01 0-.01.01L18 14.68z"/></svg>
<div class="abs" style="left:611px;top:11px;width:22px;height:22px;border-radius:11px;background:rgba(255,255,255,0.08)"></div>
<svg class="abs" style="left:612px;top:12px" width="20" height="20" viewBox="612 12 20 20"><path fill="#fff" d="M618.30 21.65 L621.40 21.65 L621.40 18.45 Z M618.30 22.65 L621.40 22.65 L621.40 25.85 Z M625.60 21.65 L622.50 21.65 L622.50 18.45 Z M625.60 22.65 L622.50 22.65 L622.50 25.85 Z"/></svg>
<div class="abs" style="left:640.3px;top:10.7px;width:22.5px;height:22.5px;border-radius:50%;background:linear-gradient(70deg,#c8b268 0%,#bbb172 40%,#95b49f 75%,#9dbbab 100%);color:rgba(255,255,255,0.9);font-size:11.5px;letter-spacing:-0.3px;text-align:center;line-height:22.5px">CK</div>
<div class="abs" style="left:658px;top:12.5px;width:3.5px;height:3.5px;border-radius:50%;background:#f03a2a"></div>
<div class="abs" style="left:654.8px;top:25.3px;width:9.5px;height:9.5px;border-radius:50%;background:#2e9a50;border:1.4px solid #fff"></div>
</body></html>
